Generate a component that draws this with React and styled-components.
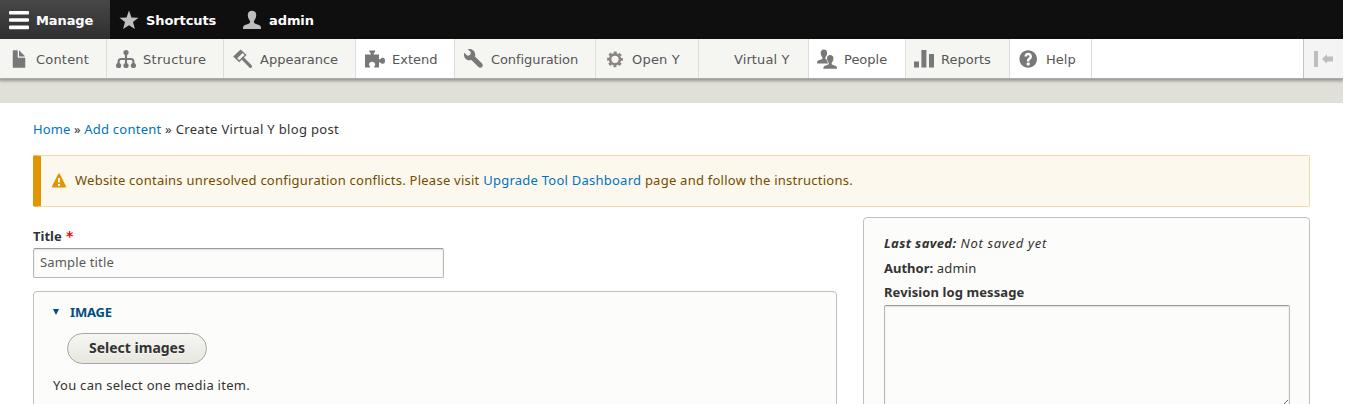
import React from "react";
import styled, { createGlobalStyle, css } from "styled-components";

const Global = createGlobalStyle`
  * { box-sizing: border-box; }
  html, body { margin: 0; background: #fff; }
  body {
    height: 404px;
    overflow: hidden;
    font: 13px/20px "Noto Sans", sans-serif;
    letter-spacing: 0.24px;
    color: #333;
  }
`;

const Page = styled.div`
  width: 1343px;
  height: 404px;
  overflow: hidden;
`;

const Toolbar = styled.nav`
  position: relative;
  font-family: "DejaVu Sans", sans-serif;
  letter-spacing: 0;
`;

const Bar = styled.div`
  display: flex;
  height: 39px;
  background: #0f0f0f;
`;

const Tab = styled.a`
  display: flex;
  align-items: center;
  width: ${(p) => p.$w}px;
  height: 39px;
  padding: 2px 0 0 36px;
  font-weight: bold;
  letter-spacing: -0.1px;
  color: #fff;
  ${(p) => p.$active && css`background: linear-gradient(#474747, #2f2f2f);`}
`;

const Icon = styled.svg`
  flex: none;
  display: block;
  width: 20px;
  height: 20px;
  margin: -2px 7px 0 -27px;
  fill: ${(p) => p.$fill || "#787878"};
`;

const Tray = styled.div`
  display: flex;
  justify-content: space-between;
  height: 40px;
  background: #fff;
  border-bottom: 1px solid #aaa;
  box-shadow: 0 1px 3px 1px rgba(0, 0, 0, 0.33);
`;

const Menu = styled.div`
  display: flex;
`;

const Item = styled.a`
  display: flex;
  align-items: center;
  width: ${(p) => p.$w}px;
  padding: 2px 0 0 ${(p) => p.$indent || 36}px;
  white-space: nowrap;
  color: #565656;
  letter-spacing: ${(p) => p.$track || 0}px;
  background: ${(p) => (p.$plain ? "#fff" : "#f5f5f2")};
  border-right: 1px solid #ddd;
`;

const Toggle = styled.button`
  display: flex;
  align-items: center;
  justify-content: center;
  width: 40px;
  padding: 0;
  border: 0;
  border-left: 1px solid #c4c4c4;
  background: #f4f4f4;
`;

const HeaderBand = styled.header`
  height: 24px;
  background: #e0e0d8;
`;

const Main = styled.main`
  padding: 16px 33px 0;
`;

const Link = styled.a`
  color: #0074bd;
`;

const Breadcrumb = styled.div`
  height: 20px;
`;

const Crumb = styled.span`
  letter-spacing: ${(p) => p.$track}px;
`;

const Warning = styled.div`
  display: flex;
  align-items: center;
  height: 52px;
  margin-top: 16px;
  padding: 0 0 2px 11px;
  gap: 9px;
  letter-spacing: 0.245px;
  color: #734c00;
  background: #fdf8ed;
  border: 1px solid #f4daa6;
  border-left: 8px solid #e09600;
  border-radius: 2px;
  svg { margin-top: 1px; }
`;

const Columns = styled.div`
  display: grid;
  grid-template-columns: 804px 447px;
  gap: 26px;
  margin-top: 10px;
`;

const Form = styled.div`
  padding-top: 9px;
`;

const Label = styled.label`
  display: block;
  height: 20px;
  font-weight: bold;
  letter-spacing: ${(p) => p.$track || 0}px;
`;

const Required = styled.span`
  margin-left: 1px;
  font: bold 14px/10px "DejaVu Sans", sans-serif;
  color: #f00;
`;

const TextInput = styled.input`
  display: block;
  width: 411px;
  height: 30px;
  margin-top: 2px;
  padding: 0 6px 2px;
  font: inherit;
  letter-spacing: 0.15px;
  color: #595959;
  background: #fcfcfa;
  border: 1px solid #b8b8b8;
  border-top-color: #999;
  border-radius: 2px;
  box-shadow: inset 0 1px 2px rgba(0, 0, 0, 0.125);
`;

const Panel = styled.section`
  background: #fcfcfa;
  border: 1px solid #bfbfbf;
  border-radius: 4px 4px 0 0;
`;

const Details = styled(Panel)`
  height: 130px;
  margin-top: 13px;
  padding: 10px 19px 0;
`;

const Summary = styled.div`
  display: flex;
  align-items: center;
  gap: 11px;
  height: 20px;
  font-weight: bold;
  letter-spacing: -0.15px;
  color: #004f80;
`;

const Button = styled.button`
  display: block;
  width: 140px;
  height: 31px;
  margin: 11px 0 0 14px;
  padding: 0 0 1px;
  font: bold 14px/18px "Noto Sans", sans-serif;
  letter-spacing: 0;
  color: #333;
  text-shadow: 0 1px rgba(255, 255, 255, 0.6);
  background: linear-gradient(#f6f6f3, #e7e7df);
  border: 1px solid #a6a6a6;
  border-radius: 20px;
`;

const Hint = styled.p`
  margin: 11px 0 0;
  letter-spacing: 0.28px;
`;

const Meta = styled(Panel)`
  height: 200px;
  padding: 15px 19px 0 20px;
`;

const MetaLine = styled.div`
  height: ${(p) => p.$h}px;
  font-style: ${(p) => (p.$italic ? "italic" : "normal")};
  letter-spacing: ${(p) => (p.$italic ? 0.68 : 0.2)}px;
  b { letter-spacing: ${(p) => (p.$italic ? 0.36 : 0)}px; }
`;

const TextArea = styled.textarea`
  display: block;
  width: 406px;
  height: 104px;
  margin-top: 3px;
  background: #fcfcfa;
  border: 1px solid #b8b8b8;
  border-top-color: #999;
  border-radius: 2px;
  box-shadow: inset 0 1px 2px rgba(0, 0, 0, 0.125);
  resize: vertical;
`;

const person = "M10 .7c-2.900 0-4.400 2-4.200 4.900.1 2.300 1 3.700 1.900 4.900.8 1.100.5 2.500-.6 3.100-1.300.7-3.900 1.100-5.100 2-.8.6-1 2-1 3.400h18c0-1.400-.2-2.800-1-3.400-1.200-.9-3.800-1.300-5.100-2-1.100-.6-1.400-2-.6-3.100.9-1.200 1.800-2.600 1.900-4.900C14.400 2.700 12.900.7 10 .7z";

const icons = {
  bars: <g><rect x="0" y="1" width="20" height="3.600" rx="1" /><rect x="0" y="8.200" width="20" height="3.600" rx="1" /><rect x="0" y="15.600" width="20" height="3.600" rx="1" /></g>,
  star: <path d="M10 .6l2.500 6.800 7 .3-5.500 4.400 1.900 7L10 15.200l-5.900 3.900 1.900-7L.5 7.700l7-.3z" />,
  user: <path d={person} />,
  file: <path transform="scale(1.25)" d="M12.500 7h-5c-.3 0-.5-.2-.5-.5v-5c0-.3-.2-.5-.5-.5h-3c-.3 0-.5.2-.5.5v13c0 .3.2.5.5.5h9c.3 0 .5-.2.5-.5v-7c0-.3-.2-.5-.5-.5zM8.500 6h4c.3 0 .3-.2.100-.4L8.400 1.400c-.2-.2-.4-.1-.4.100v4c0 .3.2.5.5.500z" />,
  structure: <g><circle cx="10" cy="3.500" r="2.600" /><circle cx="2.600" cy="16.500" r="2.600" /><circle cx="10" cy="16.500" r="2.600" /><circle cx="17.400" cy="16.500" r="2.600" /><path d="M10 3v13M2.600 16v-3.500q0-2.500 2.500-2.500h9.800q2.500 0 2.500 2.500V16" fill="none" stroke="#787878" strokeWidth="2.100" /></g>,
  brush: <g><path d="M7.600.5L.2 7.400l6 5.800L13.600 6z M6.200 11.200L4.300 9.300 9.700 4l1.900 2z" fillRule="evenodd" /><path d="M9.900 9.600l7.600 7.800" stroke="#787878" strokeWidth="3" strokeLinecap="round" /></g>,
  puzzle: <path d="M0 5.500h5.400c.5 0 .6-.5.300-1C5 3.600 4.200 3 4.200 1.500h6c0 1.500-.8 2.100-1.400 3-.3.5-.2 1 .3 1H14v4.300c0 .7.600.8 1.100.4 1.100-1 1.700-1.400 2.900-1.400 1.400 0 2 1.300 2 3s-.6 3-2 3c-1.200 0-1.800-.5-2.900-1.400-.5-.4-1.100-.2-1.100.4v4.600H9.700c-.7 0-.8-.5-.4-1 .7-.8.9-1.400.9-2.200 0-1.600-1.400-2.500-3.100-2.500S4 13.600 4 15.200c0 .8.300 1.400.9 2.200.4.5.3 1-.4 1H0z" />,
  wrench: <path transform="scale(1.25)" d="M14.416 11.586l-5.666-5.665c.15-.449.252-.921.252-1.421 0-2.485-2.016-4.500-4.502-4.500-.505 0-.981.102-1.434.255l2.431 2.431-.588 2.196-2.196.588L.268 3.025C.106 3.489 0 3.981 0 4.500 0 6.986 2.014 9 4.500 9c.5 0 .972-.102 1.421-.251l5.667 5.665c.781.781 2.047.781 2.828 0s.781-2.047 0-2.828z" />,
  gear: <g fill="none" stroke="#8b8482"><circle cx="10" cy="10.300" r="4.900" strokeWidth="2.600" /><circle cx="10" cy="10.300" r="6.800" strokeWidth="2.200" strokeDasharray="3 2.340" strokeDashoffset="1.500" /></g>,
  people: <g><path transform="translate(-.7 0) scale(.76)" d={person} /><path d={person} transform="translate(5.600 5.400) scale(.76)" stroke="#fff" strokeWidth="1.600" paintOrder="stroke" /></g>,
  chart: <path d="M0 12.500h5V18.500H0zM7.400 1h5v17.500h-5zM15 5h5v13.500h-5z" />,
  help: <path transform="translate(-.8 0) scale(1.25)" d="M8.002 1c-3.868 0-7.002 3.134-7.002 7s3.134 7 7.002 7c3.865 0 7-3.134 7-7s-3.135-7-7-7zm3 5c0 .551-.16 1.085-.477 1.586l-.158.22c-.07.093-.189.241-.361.393-.168.148-.35.299-.545.447l-.203.189-.141.129-.096.17-.021.235v.63h-2.001v-.704c.026-.396.078-.73.204-.999.125-.269.271-.498.439-.688l.225-.21-.01-.015.176-.14.137-.128c.186-.139.357-.277.516-.417l.148-.18c.098-.152.168-.323.168-.518 0-.552-.447-1-1-1s-1.002.448-1.002 1h-2c0-1.657 1.343-3 3.002-3 1.656 0 3 1.343 3 3zm-1.750 6.619c0 .344-.281.625-.625.625h-1.250c-.345 0-.626-.281-.626-.625v-1.238c0-.344.281-.625.626-.625h1.250c.344 0 .625.281.625.625v1.238z" />,
  blank: null,
};

const tabs = [
  { label: "Manage", icon: "bars", w: 110, fill: "#fff", active: true },
  { label: "Shortcuts", icon: "star", w: 123, fill: "#bebebe" },
  { label: "admin", icon: "user", w: 100, fill: "#bebebe" },
];

const items = [
  { label: "Content", icon: "file", w: 107, track: 0.2 },
  { label: "Structure", icon: "structure", w: 117, track: 0.3 },
  { label: "Appearance", icon: "brush", w: 132 },
  { label: "Extend", icon: "puzzle", w: 99, plain: true },
  { label: "Configuration", icon: "wrench", w: 141, track: -0.08 },
  { label: "Open Y", icon: "gear", w: 103, track: 0.2 },
  { label: "Virtual Y", icon: "blank", w: 110, indent: 35, track: 0.1 },
  { label: "People", icon: "people", w: 97, plain: true, indent: 35 },
  { label: "Reports", icon: "chart", w: 104, indent: 35 },
  { label: "Help", icon: "help", w: 82, plain: true, indent: 36 },
];

export default function App() {
  return (
    <Page>
      <Global />
      <Toolbar>
        <Bar>
          {tabs.map((t) => (
            <Tab key={t.label} $w={t.w} $active={t.active}>
              <Icon viewBox="0 0 20 20" $fill={t.fill}>{icons[t.icon]}</Icon>
              {t.label}
            </Tab>
          ))}
        </Bar>
        <Tray>
          <Menu>
            {items.map((t) => (
              <Item key={t.label} $w={t.w} $plain={t.plain} $track={t.track} $indent={t.indent}>
                <Icon viewBox="0 0 20 20">{icons[t.icon]}</Icon>
                {t.label}
              </Item>
            ))}
          </Menu>
          <Toggle aria-label="Vertical orientation">
            <svg width="20" height="16" viewBox="0 0 20 16" fill="#bebebe">
              <rect x="0" y="0" width="4" height="16" rx="0.5" />
              <path d="M8 8l5-4.800v2.300h6v5h-6v2.300z" />
            </svg>
          </Toggle>
        </Tray>
      </Toolbar>
      <HeaderBand />
      <Main>
        <Breadcrumb>
          <Crumb $track={0.12}><Link>Home</Link> » </Crumb>
          <Link>Add content</Link> <Crumb $track={0.33}>» Create Virtual Y blog post</Crumb>
        </Breadcrumb>
        <Warning>
          <svg width="14" height="15" viewBox="0 0 14 15">
            <path d="M7 1.500L13 13.500H1z" fill="#e09600" stroke="#e09600" strokeWidth="2" strokeLinejoin="round" />
            <path d="M6 5h2v4.500H6zM6 11h2v2H6z" fill="#fdf8ed" />
          </svg>
          <span>
            Website contains unresolved configuration conflicts. Please visit <Link>Upgrade Tool Dashboard</Link> page and follow the instructions.
          </span>
        </Warning>
        <Columns>
          <Form>
            <Label>Title <Required>*</Required></Label>
            <TextInput defaultValue="Sample title" />
            <Details>
              <Summary>
                <svg width="6" height="6" viewBox="0 0 6 6"><path d="M0 0h6L3 6z" fill="#004f80" /></svg>
                IMAGE
              </Summary>
              <Button>Select images</Button>
              <Hint>You can select one media item.</Hint>
            </Details>
          </Form>
          <Meta>
            <MetaLine $h={25} $italic><b>Last saved:</b> Not saved yet</MetaLine>
            <MetaLine $h={24}><b>Author:</b> admin</MetaLine>
            <Label $track={0.09}>Revision log message</Label>
            <TextArea />
          </Meta>
        </Columns>
      </Main>
    </Page>
  );
}
